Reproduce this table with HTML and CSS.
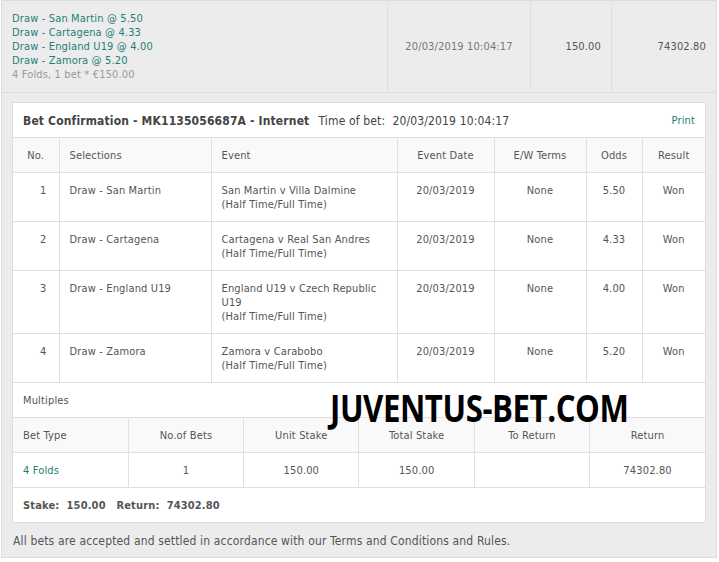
FILE: index.html
```html
<!DOCTYPE html>
<html lang="en">
<head>
    <meta charset="UTF-8">
    <title>Bet History</title>
    <link rel="stylesheet" href="styles.css">
</head>
<body>
    <div class="history">
        <table class="summary">
            <tr>
                <td class="sum-selections">
                    <div class="pick">Draw - San Martin @ 5.50</div>
                    <div class="pick">Draw - Cartagena @ 4.33</div>
                    <div class="pick">Draw - England U19 @ 4.00</div>
                    <div class="pick">Draw - Zamora @ 5.20</div>
                    <div class="fold-info">4 Folds, 1 bet * €150.00</div>
                </td>
                <td class="sum-date">20/03/2019 10:04:17</td>
                <td class="sum-stake">150.00</td>
                <td class="sum-return">74302.80</td>
            </tr>
        </table>

        <div class="confirm-card">
            <div class="confirm-head">
                <span class="confirm-title">Bet Confirmation - MK1135056687A - Internet</span>
                <span class="confirm-time">Time of bet:&nbsp; 20/03/2019 10:04:17</span>
                <a class="print-link" href="#">Print</a>
            </div>

            <table class="grid selections">
                <colgroup>
                    <col style="width:46px">
                    <col style="width:152px">
                    <col style="width:186px">
                    <col style="width:97px">
                    <col style="width:92px">
                    <col style="width:56px">
                    <col>
                </colgroup>
                <tr class="head">
                    <th class="c">No.</th>
                    <th>Selections</th>
                    <th>Event</th>
                    <th class="c">Event Date</th>
                    <th class="c">E/W Terms</th>
                    <th class="c">Odds</th>
                    <th class="c">Result</th>
                </tr>
                <tr>
                    <td class="num">1</td>
                    <td>Draw - San Martin</td>
                    <td>San Martin v Villa Dalmine<br>(Half Time/Full Time)</td>
                    <td class="c">20/03/2019</td>
                    <td class="c">None</td>
                    <td class="c">5.50</td>
                    <td class="c">Won</td>
                </tr>
                <tr>
                    <td class="num">2</td>
                    <td>Draw - Cartagena</td>
                    <td>Cartagena v Real San Andres<br>(Half Time/Full Time)</td>
                    <td class="c">20/03/2019</td>
                    <td class="c">None</td>
                    <td class="c">4.33</td>
                    <td class="c">Won</td>
                </tr>
                <tr>
                    <td class="num">3</td>
                    <td>Draw - England U19</td>
                    <td>England U19 v Czech Republic U19<br>(Half Time/Full Time)</td>
                    <td class="c">20/03/2019</td>
                    <td class="c">None</td>
                    <td class="c">4.00</td>
                    <td class="c">Won</td>
                </tr>
                <tr>
                    <td class="num">4</td>
                    <td>Draw - Zamora</td>
                    <td>Zamora v Carabobo<br>(Half Time/Full Time)</td>
                    <td class="c">20/03/2019</td>
                    <td class="c">None</td>
                    <td class="c">5.20</td>
                    <td class="c">Won</td>
                </tr>
            </table>

            <div class="multiples-label">
                Multiples
                <span class="watermark">JUVENTUS-BET.COM</span>
            </div>

            <table class="grid multiples">
                <tr class="head">
                    <th>Bet Type</th>
                    <th class="c">No.of Bets</th>
                    <th class="c">Unit Stake</th>
                    <th class="c">Total Stake</th>
                    <th class="c">To Return</th>
                    <th class="c">Return</th>
                </tr>
                <tr>
                    <td class="teal">4 Folds</td>
                    <td class="c">1</td>
                    <td class="c">150.00</td>
                    <td class="c">150.00</td>
                    <td class="c"></td>
                    <td class="c">74302.80</td>
                </tr>
            </table>

            <div class="totals">Stake:&nbsp; 150.00 &nbsp; Return:&nbsp; 74302.80</div>
        </div>

        <p class="terms">All bets are accepted and settled in accordance with our Terms and Conditions and Rules.</p>
    </div>
</body>
</html>
```

FILE: styles.css
```css
body {
    margin: 0;
    font-family: "DejaVu Sans Condensed", "DejaVu Sans", Verdana, sans-serif;
    font-stretch: condensed;
    font-size: 11px;
    letter-spacing: 0.15px;
    color: #555;
    background-color: #fff;
}
.history {
    width: 716px;
    margin-left: 1px;
    box-sizing: border-box;
    background-color: #ececec;
    border: 1px solid #dcdcdc;
    border-top: none;
    height: 558px;
}
.summary {
    width: 100%;
    border-collapse: collapse;
    border-top: 1px solid #dcdcdc;
    border-bottom: 1px solid #dcdcdc;
}
.summary td {
    height: 91px;
    padding: 0;
    border-left: 1px solid #e0e0e0;
    vertical-align: middle;
}
.summary td:first-child {
    border-left: none;
}
.sum-selections {
    width: 375px;
    padding-left: 10px !important;
    line-height: 14px;
}
.pick {
    color: #1f7f75;
}
.fold-info {
    color: #999;
}
.sum-date {
    width: 142px;
    text-align: center;
    color: #777;
}
.sum-stake {
    width: 81px;
    text-align: right;
    padding-right: 10px !important;
    box-sizing: border-box;
}
.sum-return {
    text-align: right;
    padding-right: 10px !important;
}
.confirm-card {
    margin: 9px 10px 0 10px;
    background-color: #fff;
    border: 1px solid #dcdcdc;
}
.confirm-head {
    display: flex;
    align-items: center;
    padding: 1px 10px 0 10px;
    box-sizing: border-box;
    border-bottom: 1px solid #e0e0e0;
    height: 35px;
}
.confirm-title {
    font-weight: bold;
    font-size: 12px;
    color: #444;
    margin-right: 9px;
}
.confirm-time {
    font-size: 12px;
    color: #444;
}
.print-link {
    margin-left: auto;
    color: #1f7f75;
    text-decoration: none;
}
.grid {
    width: 100%;
    border-collapse: collapse;
    table-layout: fixed;
}
.grid th,
.grid td {
    padding: 11px 10px 9px 10px;
    line-height: 14px;
    text-align: left;
    vertical-align: top;
    font-weight: normal;
    border-left: 1px solid #e0e0e0;
    border-bottom: 1px solid #e0e0e0;
}
.grid th:first-child,
.grid td:first-child {
    border-left: none;
}
.grid .head th {
    background-color: #f9f9f9;
    color: #555;
}
.grid .c {
    text-align: center;
}
.grid .num {
    text-align: right;
    padding-right: 12px;
}
.grid .teal {
    color: #1f7f75;
}
.multiples-label {
    position: relative;
    height: 34px;
    line-height: 36px;
    padding-left: 10px;
    border-bottom: 1px solid #e0e0e0;
}
.watermark {
    position: absolute;
    left: 317px;
    top: 4px;
    line-height: 40px;
    font-family: "Open Sans", sans-serif;
    font-stretch: normal;
    font-weight: bold;
    font-size: 38px;
    color: #000;
    letter-spacing: -0.5px;
    transform: scaleX(0.82);
    transform-origin: left center;
}
.totals {
    height: 34px;
    line-height: 36px;
    padding-left: 10px;
    font-weight: bold;
}
.terms {
    margin: 0;
    padding: 11px 0 0 11px;
    font-size: 12px;
    line-height: 14px;
}
```
